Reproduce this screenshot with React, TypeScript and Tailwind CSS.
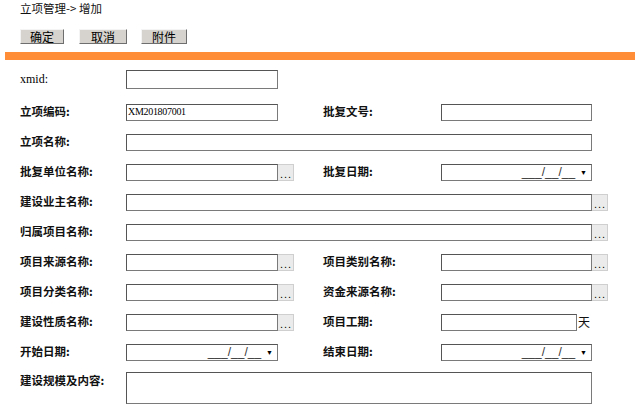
import React from "react";

const inputBase =
  "bg-white border border-[#7a7a7a] border-t-[#555] border-l-[#555] box-border";

function Input({ w, h = 17, value }: { w: number; h?: number; value?: string }) {
  return (
    <div
      className={`${inputBase} flex items-center overflow-hidden`}
      style={{ width: w, height: h }}
    >
      {value ? (
        <span className="pl-[1px] text-[10px] leading-none text-black font-['Liberation_Serif',serif] tracking-[-0.3px]">
          {value}
        </span>
      ) : null}
    </div>
  );
}

function Browse() {
  return (
    <div className="w-[16px] h-[17px] bg-[#ebebeb] border border-[#cfcfcf] border-l-0 box-border flex items-end justify-center">
      <span className="text-[11px] leading-[12px] text-black font-['Liberation_Sans',sans-serif] tracking-[1px] pl-[1px]">
        ...
      </span>
    </div>
  );
}

function DateField({ w }: { w: number }) {
  return (
    <div
      className={`${inputBase} h-[17px] flex items-center justify-end pr-[4px]`}
      style={{ width: w }}
    >
      <span className="text-[12px] leading-none text-[#333] font-['Liberation_Sans',sans-serif]">
        ___/__/__
      </span>
      <span className="ml-[5px] text-[7px] leading-none text-black">▼</span>
    </div>
  );
}

function Label({ children, w }: { children: React.ReactNode; w: number }) {
  return (
    <div
      className="shrink-0 text-[11.5px] font-bold text-[#111] leading-none font-['Noto_Sans_CJK_SC',sans-serif]"
      style={{ width: w }}
    >
      {children}
    </div>
  );
}

function Row({ children, extra = "" }: { children: React.ReactNode; extra?: string }) {
  return <div className={`flex h-[30px] items-center ${extra}`}>{children}</div>;
}

function Cell({ children }: { children: React.ReactNode }) {
  return <div className="w-[197px] shrink-0 flex items-center">{children}</div>;
}

function Btn({ children, w }: { children: React.ReactNode; w: number }) {
  return (
    <button
      className="h-[15px] bg-[#d6d3ce] border border-t-[#f4f4f4] border-l-[#f4f4f4] border-r-[#6e6e6e] border-b-[#6e6e6e] text-[12px] leading-[12px] text-black font-['Noto_Sans_CJK_SC',sans-serif] flex items-center justify-center"
      style={{ width: w }}
    >
      {children}
    </button>
  );
}

export default function App() {
  return (
    <div className="w-[640px] h-[409px] bg-white overflow-hidden">
      <div className="pl-[20px] pt-[1px] h-[15px] text-[11.5px] leading-[14px] text-[#111] font-['Noto_Sans_CJK_SC',sans-serif]">
        立项管理-&gt; 增加
      </div>
      <div className="flex pl-[20px] mt-[14px]">
        <Btn w={44}>确定</Btn>
        <div className="w-[15px]" />
        <Btn w={48}>取消</Btn>
        <div className="w-[14px]" />
        <Btn w={46}>附件</Btn>
      </div>
      <div className="mx-[5px] mt-[8px] h-[8px] bg-[#ff8d38]" />

      <div className="pl-[20px] mt-[4px]">
        <Row>
          <div className="w-[106px] shrink-0 text-[12px] leading-none text-black font-['Liberation_Serif',serif]">
            xmid:
          </div>
          <Input w={152} h={19} />
        </Row>
        <Row extra="mt-[3px]">
          <Label w={106}>立项编码:</Label>
          <Cell>
            <Input w={152} value="XM201807001" />
          </Cell>
          <Label w={118}>批复文号:</Label>
          <Input w={151} />
        </Row>
        <Row>
          <Label w={106}>立项名称:</Label>
          <Input w={466} />
        </Row>
        <Row>
          <Label w={106}>批复单位名称:</Label>
          <Cell>
            <Input w={152} />
            <Browse />
          </Cell>
          <Label w={118}>批复日期:</Label>
          <DateField w={151} />
        </Row>
        <Row>
          <Label w={106}>建设业主名称:</Label>
          <Input w={466} />
          <Browse />
        </Row>
        <Row>
          <Label w={106}>归属项目名称:</Label>
          <Input w={466} />
          <Browse />
        </Row>
        <Row>
          <Label w={106}>项目来源名称:</Label>
          <Cell>
            <Input w={152} />
            <Browse />
          </Cell>
          <Label w={118}>项目类别名称:</Label>
          <Input w={151} />
          <Browse />
        </Row>
        <Row>
          <Label w={106}>项目分类名称:</Label>
          <Cell>
            <Input w={152} />
            <Browse />
          </Cell>
          <Label w={118}>资金来源名称:</Label>
          <Input w={151} />
          <Browse />
        </Row>
        <Row>
          <Label w={106}>建设性质名称:</Label>
          <Cell>
            <Input w={152} />
            <Browse />
          </Cell>
          <Label w={118}>项目工期:</Label>
          <Input w={136} />
          <span className="ml-[1px] text-[12px] leading-none text-[#111] font-['Noto_Sans_CJK_SC',sans-serif]">
            天
          </span>
        </Row>
        <Row>
          <Label w={106}>开始日期:</Label>
          <Cell>
            <DateField w={152} />
          </Cell>
          <Label w={118}>结束日期:</Label>
          <DateField w={151} />
        </Row>
        <div className="flex pt-[5px]">
          <div className="pt-[3px]">
            <Label w={106}>建设规模及内容:</Label>
          </div>
          <div className={`${inputBase} w-[466px] h-[32px]`} />
        </div>
      </div>
    </div>
  );
}
